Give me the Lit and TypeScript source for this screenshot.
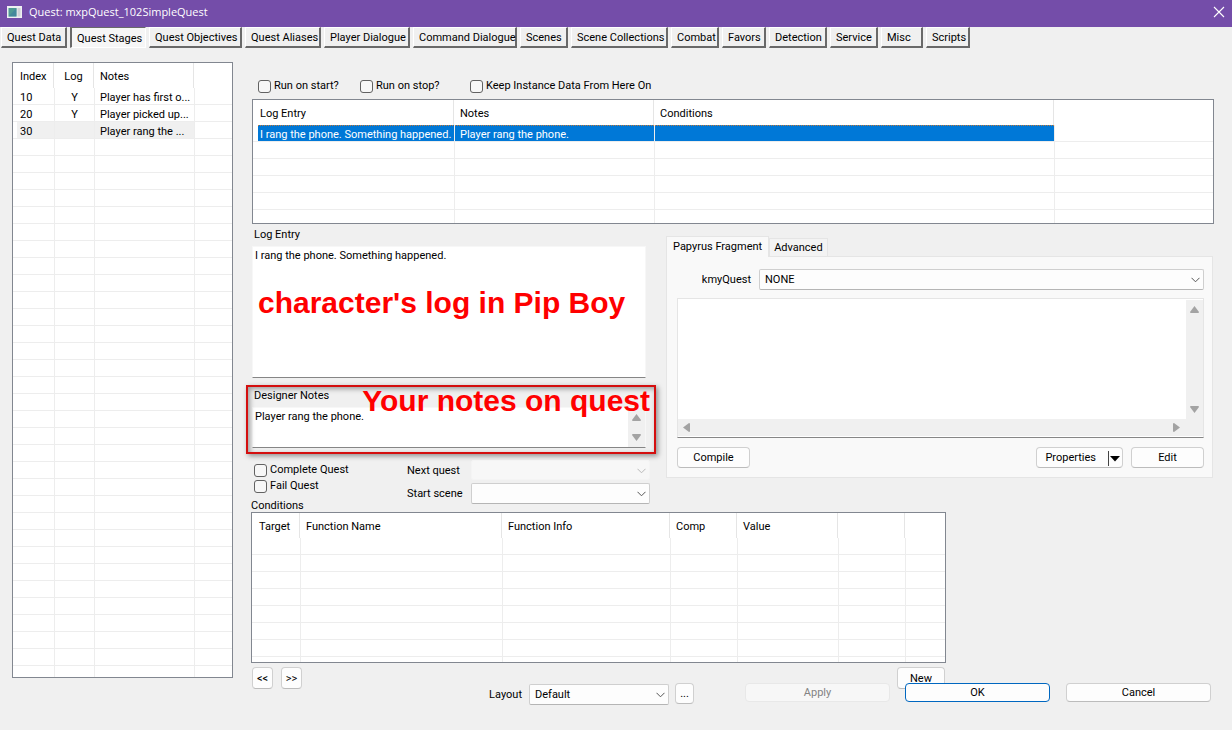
import { LitElement, html, css, svg } from "lit";
import { customElement, property, state } from "lit/decorators.js";
import { classMap } from "lit/directives/class-map.js";
import { styleMap } from "lit/directives/style-map.js";

interface Column {
  label: string;
  width?: number;
  center?: boolean;
}

const chevron = html`<svg class="chevron" viewBox="0 0 9 6" width="9" height="6" aria-hidden="true">
  <path d="M0.5 0.8 L4.5 4.8 L8.5 0.8" fill="none" stroke="currentColor" stroke-width="1" />
</svg>`;

const arrowPaths: Record<string, string> = {
  up: "M4.5 1 L9 7 Q9 8 8 8 L1 8 Q0 8 0 7 Z",
  down: "M4.5 8 L9 2 Q9 1 8 1 L1 1 Q0 1 0 2 Z",
  left: "M1 4.5 L7 0 Q8 0 8 1 L8 8 Q8 9 7 9 Z",
  right: "M8 4.5 L2 0 Q1 0 1 1 L1 8 Q1 9 2 9 Z",
};

const arrow = (dir: string) => html`<svg viewBox="0 0 9 9" width="9" height="9" aria-hidden="true">
  ${svg`<path d=${arrowPaths[dir]} fill="#a3a3a3" />`}
</svg>`;

@customElement("list-view")
export class ListView extends LitElement {
  @property({ attribute: false }) columns: Column[] = [];
  @property({ attribute: false }) rows: string[][] = [];
  @property({ type: Number }) lines = 6;
  @property({ type: Number }) selected = -1;
  @property({ type: Boolean }) focused = false;
  @property() name = "";

  static styles = css`
    :host {
      display: block;
      box-sizing: border-box;
      overflow: hidden;
      background: #fff;
      border: 1px solid #828790;
    }
    .table {
      width: 100%;
      table-layout: fixed;
      border-collapse: separate;
      border-spacing: 0;
    }
    .head {
      height: 25px;
      box-sizing: border-box;
      padding: 2px 0 0 6px;
      font-weight: 400;
      text-align: left;
      border-right: 1px solid #e5e5e5;
      white-space: nowrap;
    }
    .cell {
      height: 17px;
      box-sizing: border-box;
      padding: 3px 0 0 5px;
      line-height: 13px;
      border-left: 1px solid #ededed;
      border-bottom: 1px solid #ededed;
      white-space: nowrap;
    }
    .head:first-child,
    .cell:first-child {
      padding-left: 7px;
      border-left: 0;
    }
    .head:last-child {
      border-right: 0;
    }
    .head.center,
    .cell.center {
      padding-left: 0;
      text-align: center;
    }
    .selected .cell:not(:last-child) {
      background-color: #f0f0f0;
    }
    .selected .cell:first-child {
      background: linear-gradient(#f0f0f0, #f0f0f0) 4px 0 no-repeat #fff;
    }
    .selected.focused .cell:not(:last-child) {
      color: #fff;
      background:
        repeating-linear-gradient(90deg, #c27a3a 0 1px, #0078d7 1px 2px) 0 0 / 100% 1px no-repeat,
        #0078d7;
    }
    .selected.focused .cell:first-child {
      background:
        repeating-linear-gradient(90deg, #c27a3a 0 1px, #0078d7 1px 2px) 5px 0 / 100% 1px no-repeat,
        linear-gradient(#0078d7, #0078d7) 5px 0 no-repeat,
        #fff;
    }
  `;

  render() {
    const count = Math.max(this.lines, this.rows.length);
    return html`<table class="table" aria-label=${this.name}>
      <colgroup>
        ${this.columns.map(
          (c) => html`<col style=${styleMap(c.width ? { width: `${c.width}px` } : {})} />`
        )}
      </colgroup>
      <thead>
        <tr>
          ${this.columns.map(
            (c) => html`<th scope="col" class=${classMap({ head: true, center: !!c.center })}>${c.label}</th>`
          )}
        </tr>
      </thead>
      <tbody>
        ${Array.from({ length: count }, (_, r) => {
          const sel = r === this.selected;
          return html`<tr class=${classMap({ selected: sel, focused: sel && this.focused })}>
            ${this.columns.map(
              (c, i) => html`<td class=${classMap({ cell: true, center: !!c.center })}>${this.rows[r]?.[i] ?? ""}</td>`
            )}
          </tr>`;
        })}
      </tbody>
    </table>`;
  }
}

@customElement("app-root")
export class AppRoot extends LitElement {
  @state() private tab = "Quest Stages";

  private tabs: [string, number][] = [
    ["Quest Data", 66],
    ["Quest Stages", 76],
    ["Quest Objectives", 93],
    ["Quest Aliases", 76],
    ["Player Dialogue", 86],
    ["Command Dialogue", 104],
    ["Scenes", 48],
    ["Scene Collections", 97],
    ["Combat", 48],
    ["Favors", 44],
    ["Detection", 58],
    ["Service", 48],
    ["Misc", 42],
    ["Scripts", 44],
  ];

  static styles = css`
    :host {
      display: flex;
      flex-direction: column;
      min-height: 100vh;
      box-sizing: border-box;
      background: #f0f0f0;
      color: #000;
      font: 11px/16px Roboto, "Liberation Sans", sans-serif;
    }
    * {
      box-sizing: border-box;
    }
    button,
    select,
    textarea,
    input {
      margin: 0;
      font: inherit;
      color: inherit;
    }
    .titlebar {
      display: flex;
      align-items: center;
      gap: 7px;
      height: 27px;
      padding: 0 7px;
      background: #744da9;
      color: #fff;
      font: 11px/16px "Open Sans", "Noto Sans", sans-serif;
    }
    .title {
      flex: 1;
      margin: 0;
      padding-bottom: 3px;
      font: inherit;
    }
    .appicon {
      margin-bottom: 4px;
    }
    .close {
      display: flex;
      padding: 0;
      border: 0;
      background: none;
      margin-bottom: 4px;
    }
    .tabs {
      display: flex;
      gap: 3px;
      padding-left: 1px;
    }
    .tab {
      flex: none;
      height: 21px;
      padding: 1px 0 0 5px;
      line-height: 17px;
      text-align: left;
      white-space: nowrap;
      background: #f0f0f0;
      border: 1px solid #fff;
      border-right: 2px solid #696969;
      border-bottom: 2px solid #696969;
    }
    .tab.active {
      border: 1px solid #fff;
      border-top-color: #696969;
      border-left: 2px solid #696969;
      background: #f6f6f6;
      padding-top: 2px;
    }
    .content {
      flex: 1;
      display: flex;
      gap: 19px;
      padding: 14px 18px 0 12px;
    }
    .stages {
      flex: none;
      width: 221px;
      height: 616px;
    }
    .main {
      flex: 1;
      min-width: 0;
      padding-top: 16px;
    }
    .flags {
      display: grid;
      grid-template-columns: 102px 110px auto;
      height: 15px;
      margin: 0 0 6px 6px;
    }
    .check {
      display: flex;
      align-items: center;
      gap: 3px;
      height: 16px;
      white-space: nowrap;
    }
    .box {
      appearance: none;
      flex: none;
      width: 13px;
      height: 13px;
      background: #f7f7f7;
      border: 1px solid #626262;
      border-radius: 3px;
    }
    .box:checked {
      background: #0067c0;
    }
    .log {
      height: 125px;
    }
    .editors {
      display: flex;
      gap: 20px;
      align-items: flex-start;
    }
    .left {
      flex: none;
      width: 394px;
    }
    .field {
      position: relative;
      display: block;
    }
    .caption {
      display: block;
      padding-left: 2px;
      line-height: 22px;
    }
    .text {
      display: block;
      width: 100%;
      padding: 1px 2px 0;
      resize: none;
      outline: 0;
      border: 1px solid #f7f7f7;
      border-bottom-color: #868686;
      background: #fff;
    }
    .entry {
      height: 132px;
    }
    .notes {
      margin-top: 7px;
    }
    .memo {
      display: grid;
      grid-template-columns: 1fr 17px;
      height: 41px;
      background: #fff;
      border: 1px solid #f7f7f7;
      border-bottom-color: #868686;
    }
    .memo .text,
    .code .text {
      border: 0;
      height: 100%;
    }
    .strip {
      display: flex;
      flex-direction: column;
      align-items: center;
      justify-content: space-between;
      padding: 5px 0;
      background: #f0f0f0;
    }
    .strip.wide {
      flex-direction: row;
      padding: 0 4px;
    }
    .strip.wide.corner {
      padding-right: 22px;
      grid-column: 1 / -1;
    }
    .remark {
      position: absolute;
      color: #f00;
      font: bold 30px/32px "Liberation Sans", Arial, sans-serif;
      white-space: nowrap;
      pointer-events: none;
      margin: 0;
    }
    .remark.entrynote {
      left: 6px;
      top: 63px;
    }
    .remark.notesnote {
      right: -4px;
      top: 0;
    }
    .frame {
      position: absolute;
      inset: 0 -10px -6px -6px;
      border: 2px solid #d40f0f;
      box-shadow: 2px 2px 5px rgba(0, 0, 0, 0.4), inset 2px 2px 5px rgba(0, 0, 0, 0.35);
      pointer-events: none;
    }
    .options {
      display: grid;
      grid-template-columns: 155px 64px 1fr;
      margin: 12px -4px 0 0;
    }
    .marks {
      display: flex;
      flex-direction: column;
      padding-top: 2px;
    }
    .marks .check {
      padding-left: 2px;
    }
    .heading {
      margin: 6px 0 0 -1px;
      line-height: 12px;
      font-size: 11px;
      font-weight: 400;
    }
    .pairs {
      grid-column: span 2;
      display: grid;
      grid-template-columns: 64px 1fr;
      gap: 3px 0;
      align-content: start;
    }
    .pairs label {
      padding-top: 2px;
      line-height: 18px;
    }
    .combo {
      position: relative;
      display: block;
    }
    .combo select {
      appearance: none;
      display: block;
      width: 100%;
      height: 21px;
      padding: 1px 20px 0 5px;
      border: 1px solid #cfcfcf;
      border-bottom-color: #b5b5b5;
      border-radius: 2px;
      background: #fdfdfd;
    }
    .combo select:disabled {
      opacity: 1;
      height: 20px;
      border-color: #f4f4f4;
      background: #f7f7f7;
    }
    .combo .chevron {
      position: absolute;
      right: 4px;
      top: 8px;
      color: #555;
      pointer-events: none;
    }
    .combo select:disabled + .chevron {
      color: #b9b9b9;
    }
    .papyrus {
      flex: 1;
      min-width: 0;
      margin: 12px 1px 0 0;
    }
    .minitabs {
      display: flex;
      align-items: flex-end;
    }
    .minitab {
      height: 18px;
      padding: 0 4px;
      border: 1px solid #e5e5e5;
      border-bottom: 0;
      background: #f3f3f3;
    }
    .minitab.active {
      position: relative;
      height: 21px;
      padding: 0 6px 1px;
      margin-bottom: -1px;
      border-color: #e5e5e5;
      background: #f9f9f9;
    }
    .panel {
      padding: 12px 8px 9px 10px;
      border: 1px solid #e5e5e5;
      background: #f9f9f9;
    }
    .bind {
      display: grid;
      grid-template-columns: 82px 1fr;
      align-items: center;
    }
    .bind label {
      padding-right: 8px;
      text-align: right;
    }
    .code {
      display: grid;
      grid-template: 1fr 17px / 1fr 17px;
      height: 140px;
      margin: 8px 0 9px;
      padding: 1px 0;
      background: #fff;
      border: 1px solid #e5e5e5;
      border-bottom-color: #868686;
    }
    .actions {
      display: flex;
      gap: 8px;
    }
    .spacer {
      flex: 1;
    }
    .btn {
      display: flex;
      align-items: center;
      justify-content: center;
      height: 21px;
      padding: 1px 0 0;
      border: 1px solid #d0d0d0;
      border-bottom-color: #bcbcbc;
      border-radius: 4px;
      background: #fdfdfd;
      white-space: nowrap;
    }
    .actions .btn {
      width: 73px;
    }
    .actions .split {
      width: 87px;
      justify-content: flex-end;
      gap: 12px;
      padding-right: 2px;
    }
    .conditions {
      max-width: 695px;
      height: 151px;
      margin-left: -1px;
    }
    .nav {
      display: flex;
      gap: 8px;
      max-width: 693px;
      margin-top: 4px;
    }
    .nav .btn {
      width: 21px;
      height: 22px;
    }
    .nav .new {
      width: 48px;
    }
    .footer {
      display: flex;
      justify-content: flex-end;
      align-items: flex-start;
      margin-top: -6px;
      padding: 0 21px 25px;
    }
    .footer label {
      padding: 4px 7px 0 0;
    }
    .footer .combo {
      width: 140px;
      margin: 1px 6px 0 0;
    }
    .footer .more {
      width: 19px;
      margin-right: 51px;
    }
    .footer .wide {
      width: 145px;
      height: 19px;
      margin-right: 16px;
    }
    .footer .apply {
      margin-right: 15px;
    }
    .footer .wide:last-child {
      margin-right: 0;
    }
    .footer .ok {
      border-color: #0067c0;
    }
    .btn:disabled {
      color: #838383;
      background: #f7f7f7;
      border-color: #e8e8e8;
    }
  `;

  private check(label: string) {
    return html`<label class="check"><input class="box" type="checkbox" />${label}</label>`;
  }

  render() {
    return html`
      <header class="titlebar">
        <svg class="appicon" width="15" height="12" viewBox="0 0 15 12" aria-hidden="true">
          <rect width="15" height="12" fill="#eef0f2" />
          <rect x="1.5" y="2" width="8" height="8.5" fill="#4f9a94" />
          <path d="M1.5 10.5 L9.5 2 V10.5 Z" fill="#3d7fa0" opacity="0.6" />
          <rect x="10.5" y="2" width="3" height="8.5" fill="#cfd3d6" />
        </svg>
        <h1 class="title">Quest: mxpQuest_102SimpleQuest</h1>
        <button class="close" aria-label="Close">
          <svg width="12" height="12" viewBox="0 0 12 12" aria-hidden="true">
            <path d="M1 1 L11 11 M11 1 L1 11" stroke="#fff" stroke-width="1.1" />
          </svg>
        </button>
      </header>
      <nav class="tabs" role="tablist">
        ${this.tabs.map(
          ([t, width]) => html`<button
            role="tab"
            aria-selected=${t === this.tab}
            class=${classMap({ tab: true, active: t === this.tab })}
            style=${styleMap({ width: `${width}px` })}
            @click=${() => (this.tab = t)}
          >${t}</button>`
        )}
      </nav>
      <main class="content">
        <list-view
          class="stages"
          name="Stages"
          .columns=${[{ label: "Index", width: 41 }, { label: "Log", width: 40, center: true }, { label: "Notes", width: 100 }, { label: "" }]}
          .rows=${[["10", "Y", "Player has first o..."], ["20", "Y", "Player picked up..."], ["30", "", "Player rang the ..."]]}
          .lines=${36}
          .selected=${2}
        ></list-view>
        <section class="main">
          <div class="flags">
            ${this.check("Run on start?")} ${this.check("Run on stop?")}
            ${this.check("Keep Instance Data From Here On")}
          </div>
          <list-view
            class="log"
            name="Log entries"
            focused
            .columns=${[{ label: "Log Entry", width: 201 }, { label: "Notes", width: 200 }, { label: "Conditions", width: 400 }, { label: "" }]}
            .rows=${[["I rang the phone. Something happened.", "Player rang the phone."]]}
            .selected=${0}
          ></list-view>
          <div class="editors">
            <div class="left">
              <div class="field">
                <label class="caption" for="entry">Log Entry</label>
                <textarea id="entry" class="text entry" .value=${"I rang the phone. Something happened."}></textarea>
                <p class="remark entrynote">character's log in Pip Boy</p>
              </div>
              <div class="field notes">
                <label class="caption" for="notes">Designer Notes</label>
                <div class="memo">
                  <textarea id="notes" class="text" .value=${"Player rang the phone."}></textarea>
                  <div class="strip">${arrow("up")}${arrow("down")}</div>
                </div>
                <div class="frame"></div>
                <p class="remark notesnote">Your notes on quest</p>
              </div>
              <div class="options">
                <div class="marks">
                  ${this.check("Complete Quest")} ${this.check("Fail Quest")}
                  <h2 class="heading">Conditions</h2>
                </div>
                <div class="pairs">
                  <label for="next">Next quest</label>
                  <span class="combo"><select id="next" disabled></select>${chevron}</span>
                  <label for="scene">Start scene</label>
                  <span class="combo"><select id="scene"></select>${chevron}</span>
                </div>
              </div>
            </div>
            <section class="papyrus">
              <div class="minitabs" role="tablist">
                <button class="minitab active" role="tab" aria-selected="true">Papyrus Fragment</button>
                <button class="minitab" role="tab" aria-selected="false">Advanced</button>
              </div>
              <div class="panel">
                <div class="bind">
                  <label for="kmy">kmyQuest</label>
                  <span class="combo"><select id="kmy"><option>NONE</option></select>${chevron}</span>
                </div>
                <div class="code">
                  <textarea class="text" aria-label="Fragment source"></textarea>
                  <div class="strip">${arrow("up")}${arrow("down")}</div>
                  <div class="strip wide corner">${arrow("left")}${arrow("right")}</div>
                </div>
                <div class="actions">
                  <button class="btn">Compile</button>
                  <span class="spacer"></span>
                  <button class="btn split">
                    Properties
                    <svg width="12" height="15" viewBox="0 0 12 15" aria-hidden="true">
                      <path d="M0.5 0 V15" stroke="#444" />
                      <path d="M2 5 H12 L7 10.5 Z" fill="#000" />
                    </svg>
                  </button>
                  <button class="btn">Edit</button>
                </div>
              </div>
            </section>
          </div>
          <list-view
            class="conditions"
            name="Conditions"
            .columns=${[{ label: "Target", width: 48 }, { label: "Function Name", width: 202 }, { label: "Function Info", width: 168 }, { label: "Comp", width: 67 }, { label: "Value", width: 101 }, { label: "", width: 67 }, { label: "" }]}
            .lines=${8}
          ></list-view>
          <div class="nav">
            <button class="btn">&lt;&lt;</button>
            <button class="btn">&gt;&gt;</button>
            <span class="spacer"></span>
            <button class="btn new">New</button>
          </div>
        </section>
      </main>
      <footer class="footer">
        <label for="layout">Layout</label>
        <span class="combo"><select id="layout"><option>Default</option></select>${chevron}</span>
        <button class="btn more">...</button>
        <button class="btn wide apply" disabled>Apply</button>
        <button class="btn wide ok">OK</button>
        <button class="btn wide">Cancel</button>
      </footer>
    `;
  }
}
